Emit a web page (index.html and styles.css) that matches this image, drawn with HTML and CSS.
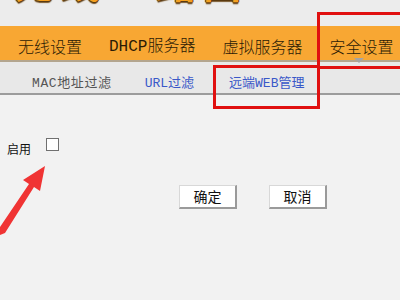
FILE: index.html
```html
<!DOCTYPE html>
<html lang="zh">
<head>
<meta charset="utf-8">
<link rel="stylesheet" href="styles.css">
</head>
<body>
<div class="page">
  <div class="header">
    <div class="logo"><span>无线</span><span class="l2">路由</span></div>
  </div>
  <div class="nav">
    <span class="nav-item">无线设置</span>
    <span class="nav-item"><span class="lat">DHCP</span>服务器</span>
    <span class="nav-item">虚拟服务器</span>
    <span class="nav-item active">安全设置</span>
  </div>
  <div class="subnav">
    <span class="sub-item gray"><span class="lat">MAC</span>地址过滤</span>
    <span class="sub-item blue u"><span class="lat">URL</span>过滤</span>
    <span class="sub-item blue r"><span>远端</span><span class="lat">WEB</span>管理</span>
  </div>
  <div class="content">
    <div class="row">
      <span class="label">启用</span>
      <span class="checkbox"></span>
    </div>
    <div class="buttons">
      <span class="btn">确定</span>
      <span class="btn">取消</span>
    </div>
  </div>
  <div class="mark mark-a"></div>
  <div class="mark mark-b"></div>
  <svg class="arrow" width="60" height="80" viewBox="0 0 60 80">
    <polygon points="0,64 29,21 23,17 45,3 40,28 34,24 5,70 0,72" fill="#f03434"/>
  </svg>
</div>
</body>
</html>
```
FILE: styles.css
```css
html, body {
  margin: 0;
  padding: 0;
}
body {
  width: 400px;
  height: 300px;
  overflow: hidden;
  background: #f2f2f2;
  font-family: "Noto Sans CJK SC", "DejaVu Sans", sans-serif;
}
.page {
  position: relative;
  width: 400px;
  height: 300px;
}
.header {
  height: 26px;
  background: #ececec;
  overflow: hidden;
}
.logo {
  display: flex;
  gap: 30px;
  padding-left: 14px;
  margin-top: -40px;
  font-size: 40px;
  font-weight: bold;
  line-height: 42px;
  color: #f4a020;
  text-shadow: 0 1px 0 #5a3a10, 1px 0 0 #5a3a10, -1px 0 0 #5a3a10, 0 2px 1px #7a5a30;
  letter-spacing: 6px;
}
.logo .l2 {
  margin-left: 20px;
}
.nav {
  height: 34px;
  background: #f8a733;
  display: flex;
  align-items: center;
  gap: 27px;
  padding-left: 18px;
  border-bottom: 2px solid #b3a58e;
  font-size: 16px;
  color: #2b1b05;
}
.nav-item {
  line-height: 16px;
  padding-top: 5px;
  white-space: nowrap;
  position: relative;
  font-weight: 300;
}
.lat {
  font-family: "Liberation Mono", "DejaVu Sans Mono", monospace;
}
.nav-item.active::after {
  content: "";
  position: absolute;
  left: 25px;
  top: 25px;
  border-left: 5px solid transparent;
  border-right: 5px solid transparent;
  border-top: 5px solid #a4a4a4;
}
.subnav {
  height: 31px;
  background: #e8e8e8;
  border-bottom: 2px solid #9c9c9c;
  display: flex;
  align-items: center;
  padding-left: 32px;
  font-size: 13px;
  white-space: nowrap;
}
.sub-item {
  padding-top: 9px;
  line-height: 13px;
}
.sub-item.gray {
  color: #555555;
  letter-spacing: 0.6px;
}
.sub-item.blue {
  color: #3a58c8;
}
.sub-item.u {
  margin-left: 33px;
}
.sub-item.r {
  margin-left: 35px;
}
.content {
  padding-top: 42px;
}
.row {
  display: flex;
  align-items: center;
  height: 14px;
  font-size: 12px;
  color: #111;
}
.label {
  margin-left: 7px;
  padding-top: 8px;
}
.checkbox {
  margin-left: 15px;
  width: 11px;
  height: 11px;
  border: 1px solid #707070;
  background: #fff;
}
.buttons {
  display: flex;
  gap: 32px;
  margin-top: 34px;
  margin-left: 179px;
}
.btn {
  box-sizing: border-box;
  width: 58px;
  height: 24px;
  background: #fff;
  border: 1px solid #d8d8d8;
  border-right: 2px solid #9a9a9a;
  border-bottom: 2px solid #9a9a9a;
  font-size: 14px;
  line-height: 20px;
  text-align: center;
  color: #111;
}
.mark {
  position: absolute;
  border: 3px solid #e01010;
  box-sizing: border-box;
}
.mark-a {
  left: 317px;
  top: 12px;
  width: 90px;
  height: 57px;
}
.mark-b {
  left: 213px;
  top: 65px;
  width: 107px;
  height: 44px;
}
.arrow {
  position: absolute;
  left: 0;
  top: 163px;
}
```
